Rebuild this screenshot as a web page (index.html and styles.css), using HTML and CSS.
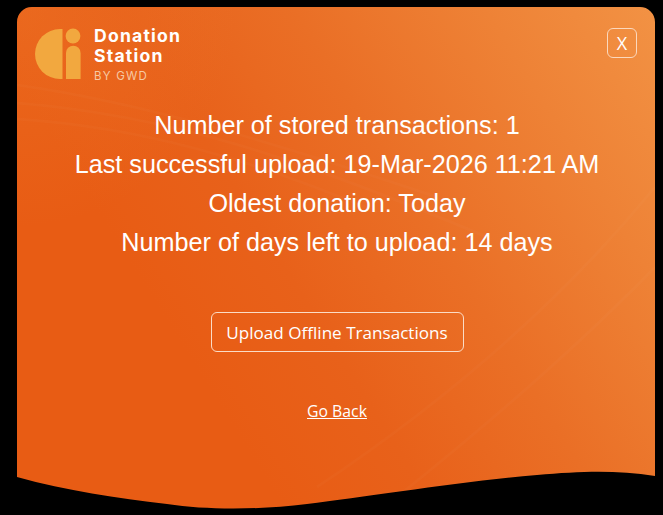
FILE: index.html
```html
<!DOCTYPE html>
<html lang="en">
<head>
<meta charset="utf-8">
<title>Donation Station</title>
<link rel="stylesheet" href="styles.css">
</head>
<body>
<main class="card">
  <svg class="streaks" viewBox="0 0 638 502" preserveAspectRatio="none" aria-hidden="true">
    <path d="M0 78 C120 95 240 130 420 190" />
    <path d="M0 96 C150 108 280 150 470 230" />
    <path d="M0 112 C120 120 230 150 360 205" />
    <path d="M300 480 C420 400 540 300 638 180" />
    <path d="M380 490 C480 410 570 330 638 260" />
  </svg>
  <header class="top">
    <div class="brand">
      <svg class="mark" viewBox="0 0 46 52" aria-hidden="true">
        <path d="M27.5 1 V51 H25 A25 25 0 0 1 25 1 Z" fill="#f2a83f"/>
        <circle cx="38" cy="8" r="7.4" fill="#f2a83f"/>
        <path d="M31 25 A7.3 7.3 0 0 1 45.6 25 V51 H31 Z" fill="#f2a83f"/>
      </svg>
      <div class="wordmark">
        <span class="name">Donation</span>
        <span class="name">Station</span>
        <span class="by">BY GWD</span>
      </div>
    </div>
    <button class="close" type="button">X</button>
  </header>
  <section class="stats">
    <p>Number of stored transactions: 1</p>
    <p>Last successful upload: 19-Mar-2026 11:21 AM</p>
    <p>Oldest donation: Today</p>
    <p>Number of days left to upload: 14 days</p>
  </section>
  <button class="upload" type="button">Upload Offline Transactions</button>
  <a class="back" href="#">Go Back</a>
</main>
</body>
</html>
```
FILE: styles.css
```css
* { box-sizing: border-box; }
html, body { margin: 0; height: 100%; background: #000; overflow: hidden; }
body { padding: 7px 8px 6px 17px; font-family: "Liberation Sans", Arial, sans-serif; color: #fff; }
.card {
  position: relative;
  width: 638px;
  height: 502px;
  display: flex;
  flex-direction: column;
  align-items: center;
  padding: 20px 18px 0 20px;
  background:
    radial-gradient(circle at 0 0, rgba(240, 130, 50, .3) 0, rgba(240, 130, 50, 0) 220px),
    linear-gradient(238deg, #f29244 0%, #ee8236 18%, #ea6f26 38%, #e8611a 56%, #e85c14 72%, #e85c14 100%);
  clip-path: path("M0 15 A15 15 0 0 1 15 0 H623 A15 15 0 0 1 638 15 V469 C600 463 565 464 520 468 C440 475 350 490 290 497 C240 503 190 503 150 497 C100 491 50 484 0 470 Z");
}
.streaks { position: absolute; inset: 0; width: 100%; height: 100%; pointer-events: none; }
.streaks path { fill: none; stroke: #fff; stroke-opacity: .018; stroke-width: 3; }
.top { position: relative; width: 100%; display: flex; justify-content: space-between; align-items: flex-start; }
.brand { display: flex; align-items: flex-start; gap: 13px; margin-left: -2px; }
.mark { width: 46px; height: 52px; margin-top: 1px; }
.wordmark { display: flex; flex-direction: column; margin-top: -1px; }
.name { font: 700 17.6px/20px "Inter", sans-serif; letter-spacing: 1.2px; }
.by { font: 400 11.5px/15px "Inter", sans-serif; letter-spacing: 1.2px; color: #f6c9a4; margin-top: 3px; }
.close {
  width: 30px;
  height: 30px;
  margin-top: 1px;
  padding: 0;
  border: 1.5px solid #fbd8bd;
  border-radius: 6px;
  background: transparent;
  color: #fff;
  font: 400 18px "Open Sans", sans-serif;
}
.stats { position: relative; margin-top: 22px; text-align: center; font-size: 25.2px; }
.stats p { margin: 0; line-height: 39px; white-space: nowrap; }
.upload {
  position: relative;
  width: 253px;
  height: 40px;
  margin-top: 50px;
  padding: 0;
  border: 1.5px solid #fbdcc6;
  border-radius: 6px;
  background: transparent;
  color: #fff;
  font: 400 17.1px "Open Sans", sans-serif;
}
.back { position: relative; margin-top: 48px; color: #fff; font: 400 15.8px "Open Sans", sans-serif; }
```
